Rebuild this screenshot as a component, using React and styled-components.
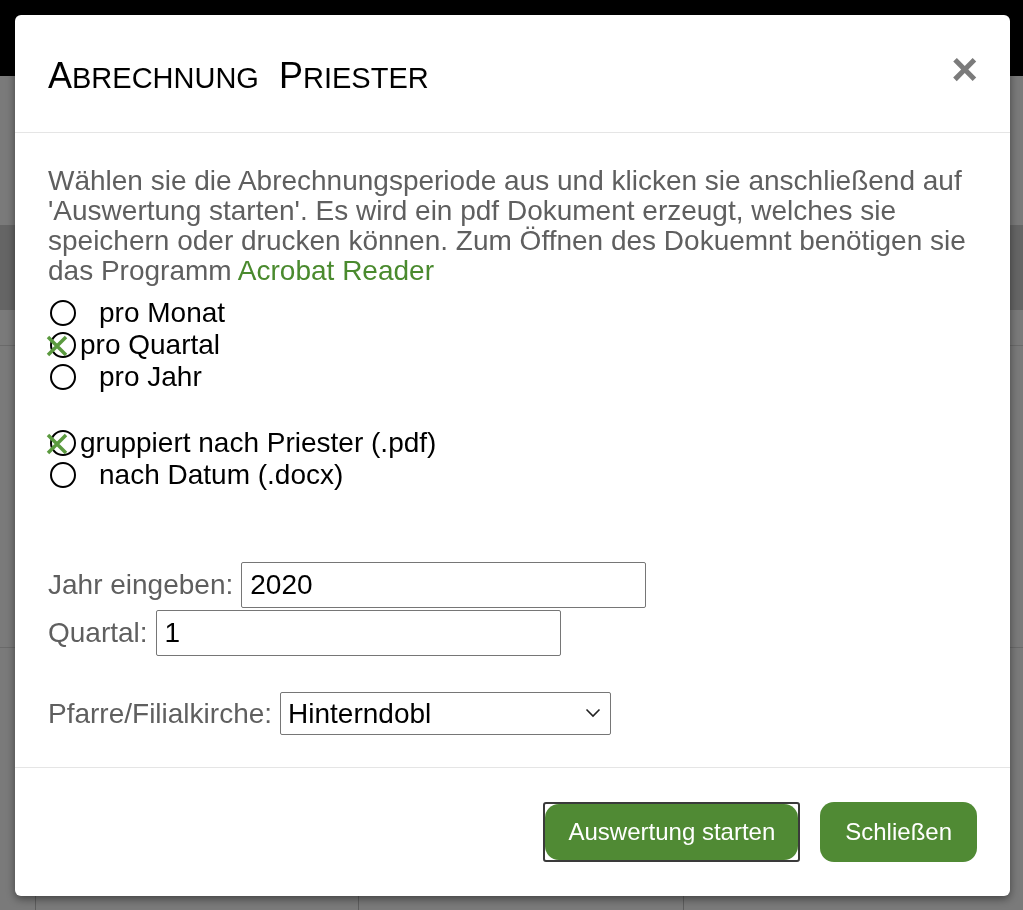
import React from "react";
import styled, { createGlobalStyle } from "styled-components";

const GlobalStyles = createGlobalStyle`
  html, body {
    margin: 0;
    padding: 0;
    background: #7a7a7a;
    font-family: "Liberation Sans", Arial, sans-serif;
  }
`;

const Page = styled.div`
  width: 100vw;
  height: 100vh;
  overflow: hidden;
  display: flex;
  flex-direction: column;
  background: #7a7a7a;
`;

const TopBar = styled.div`
  height: 76px;
  flex-shrink: 0;
  background: #000;
`;

const Section = styled.div`
  height: ${({ h }) => h}px;
  flex-shrink: 0;
  background: ${({ dark }) => (dark ? "#656565" : "#7a7a7a")};
  border-bottom: ${({ line }) => (line ? "1px solid #6a6a6a" : "none")};
`;

const Columns = styled.div`
  flex: 1;
  display: grid;
  grid-template-columns: 35px 323px 325px 1fr;
`;

const Column = styled.div`
  border-left: ${({ first }) => (first ? "none" : "1px solid #5e5e5e")};
`;

const Overlay = styled.div`
  position: fixed;
  inset: 0;
  padding: 15px 13px 0 15px;
`;

const Modal = styled.div`
  width: 995px;
  background: #fff;
  border-radius: 6px;
  box-shadow: 0 3px 9px rgba(0, 0, 0, 0.45);
  display: flex;
  flex-direction: column;
`;

const Header = styled.div`
  height: 117px;
  padding: 0 33px;
  display: flex;
  align-items: center;
  justify-content: space-between;
  border-bottom: 1px solid #e5e5e5;
`;

const Title = styled.h4`
  margin: 0;
  padding-top: 4px;
  font-size: 29px;
  font-weight: normal;
  text-transform: uppercase;
  word-spacing: 12px;
  color: #000;
`;

const Initial = styled.span`
  font-size: 36px;
`;

const Close = styled.button`
  border: 0;
  background: none;
  padding: 0;
  margin: 0 -1px 10px 0;
  font-family: "Liberation Sans", Arial, sans-serif;
  font-size: 46px;
  font-weight: bold;
  line-height: 1;
  color: #7b7b7b;
  cursor: pointer;
`;

const Body = styled.div`
  padding: 33px 33px 32px;
  display: flex;
  flex-direction: column;
`;

const Intro = styled.p`
  margin: 0 0 11px;
  font-size: 28px;
  line-height: 30px;
  color: #5f5f5f;
`;

const Link = styled.a`
  color: #4a8a2e;
  text-decoration: none;
`;

const RadioGroup = styled.div`
  display: flex;
  flex-direction: column;
  margin-bottom: ${({ gap }) => gap}px;
`;

const RadioRow = styled.label`
  position: relative;
  height: 32px;
  display: flex;
  align-items: center;
  font-size: 28px;
  color: #000;
`;

const Circle = styled.span`
  box-sizing: border-box;
  width: 26px;
  height: 26px;
  margin-left: 2px;
  border: 2px solid #000;
  border-radius: 50%;
  flex-shrink: 0;
`;

const Check = styled.svg`
  position: absolute;
  left: -3px;
  top: 5px;
`;

const RadioText = styled.span`
  margin-left: ${({ checked }) => (checked ? 4 : 23)}px;
`;

const Field = styled.div`
  display: flex;
  align-items: center;
  margin-bottom: ${({ gap }) => gap}px;
`;

const Label = styled.span`
  font-size: 28px;
  color: #5f5f5f;
  margin-right: 8px;
`;

const Input = styled.input`
  box-sizing: border-box;
  width: 405px;
  height: 46px;
  padding: 0 8px;
  border: 1px solid #767676;
  border-radius: 2px;
  font-family: "Liberation Sans", Arial, sans-serif;
  font-size: 28px;
  color: #000;
  outline: none;
`;

const SelectWrap = styled.div`
  position: relative;
  display: flex;
`;

const Select = styled.select`
  box-sizing: border-box;
  width: 331px;
  height: 43px;
  padding: 0 40px 0 7px;
  border: 1px solid #767676;
  border-radius: 2px;
  background: #fff;
  appearance: none;
  font-family: "Liberation Sans", Arial, sans-serif;
  font-size: 28px;
  color: #000;
`;

const Chevron = styled.svg`
  position: absolute;
  right: 10px;
  top: 16px;
  pointer-events: none;
`;

const Footer = styled.div`
  border-top: 1px solid #e5e5e5;
  padding: 34px 33px 34px;
  display: flex;
  justify-content: flex-end;
  gap: 20px;
`;

const FocusRing = styled.span`
  display: flex;
  border: 2px solid #3a3a3a;
  border-radius: 3px;
`;

const Button = styled.button`
  height: ${({ inner }) => (inner ? 56 : 60)}px;
  padding: 0 ${({ inner }) => (inner ? 23 : 25)}px;
  border: 0;
  border-radius: 14px;
  background: #508a34;
  color: #fff;
  font-family: "Liberation Sans", Arial, sans-serif;
  font-size: 24px;
  cursor: pointer;
`;

const periods = [
  { id: "m", label: "pro Monat", checked: false },
  { id: "q", label: "pro Quartal", checked: true },
  { id: "j", label: "pro Jahr", checked: false },
];

const formats = [
  { id: "pdf", label: "gruppiert nach Priester (.pdf)", checked: true },
  { id: "docx", label: "nach Datum (.docx)", checked: false },
];

const Radio = ({ label, checked }) => (
  <RadioRow>
    <Circle />
    {checked && (
      <Check width="24" height="24" viewBox="0 0 24 24">
        <path
          d="M3 3 L21 21 M21 3 L3 21"
          stroke="#5b9a3f"
          strokeWidth="3.5"
          fill="none"
        />
      </Check>
    )}
    <RadioText checked={checked}>{label}</RadioText>
  </RadioRow>
);

const App = () => {
  return (
    <>
      <GlobalStyles />
      <Page>
        <TopBar />
        <Section h={149} />
        <Section h={85} dark />
        <Section h={35} line />
        <Section h={301} line />
        <Columns>
          <Column first />
          <Column />
          <Column />
          <Column />
        </Columns>
      </Page>
      <Overlay>
        <Modal>
          <Header>
            <Title>
              <Initial>A</Initial>brechnung <Initial>P</Initial>riester
            </Title>
            <Close>×</Close>
          </Header>
          <Body>
            <Intro>
              Wählen sie die Abrechnungsperiode aus und klicken sie anschließend
              auf 'Auswertung starten'. Es wird ein pdf Dokument erzeugt, welches
              sie speichern oder drucken können. Zum Öffnen des Dokuemnt
              benötigen sie das Programm <Link href="#">Acrobat Reader</Link>
            </Intro>
            <RadioGroup gap={34}>
              {periods.map((p) => (
                <Radio key={p.id} label={p.label} checked={p.checked} />
              ))}
            </RadioGroup>
            <RadioGroup gap={71}>
              {formats.map((f) => (
                <Radio key={f.id} label={f.label} checked={f.checked} />
              ))}
            </RadioGroup>
            <Field gap={2}>
              <Label>Jahr eingeben:</Label>
              <Input defaultValue="2020" />
            </Field>
            <Field gap={36}>
              <Label>Quartal:</Label>
              <Input defaultValue="1" />
            </Field>
            <Field gap={0}>
              <Label>Pfarre/Filialkirche:</Label>
              <SelectWrap>
                <Select defaultValue="Hinterndobl">
                  <option>Hinterndobl</option>
                </Select>
                <Chevron width="16" height="10" viewBox="0 0 16 10">
                  <path d="M1.5 1.5 L8 8 L14.5 1.5" stroke="#222" strokeWidth="1.6" fill="none" />
                </Chevron>
              </SelectWrap>
            </Field>
          </Body>
          <Footer>
            <FocusRing>
              <Button inner>Auswertung starten</Button>
            </FocusRing>
            <Button>Schließen</Button>
          </Footer>
        </Modal>
      </Overlay>
    </>
  );
};

export default App;
